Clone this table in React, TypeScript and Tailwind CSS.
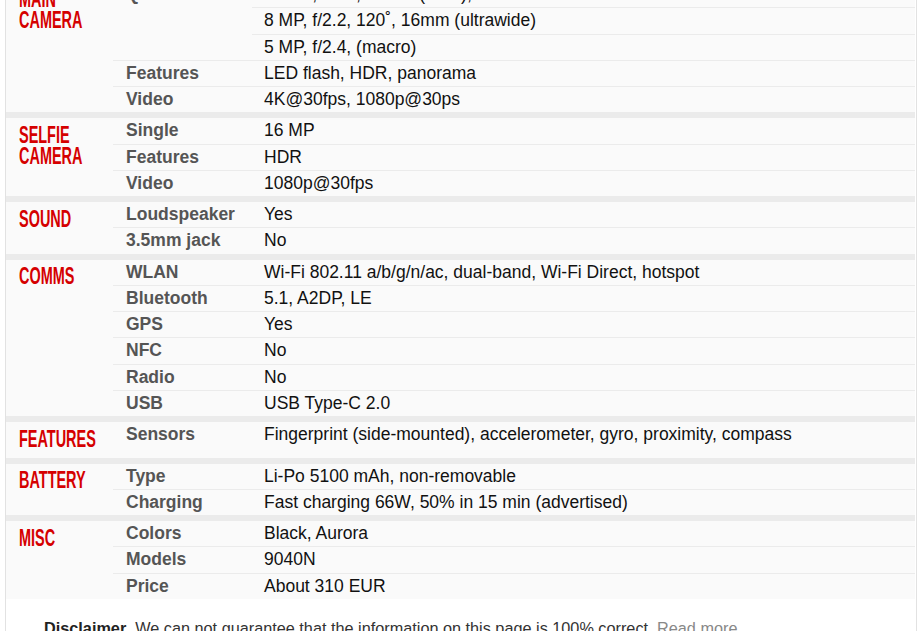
type Row = { label?: string; value: string };
type Section = { title: string[]; rows: Row[] };

const sections: Section[] = [
  {
    title: ["Main", "Camera"],
    rows: [
      { label: "Quad", value: "64 MP, f/1.8, 26mm (wide), PDAF" },
      { value: "8 MP, f/2.2, 120˚, 16mm (ultrawide)" },
      { value: "5 MP, f/2.4, (macro)" },
      { label: "Features", value: "LED flash, HDR, panorama" },
      { label: "Video", value: "4K@30fps, 1080p@30ps" },
    ],
  },
  {
    title: ["Selfie", "Camera"],
    rows: [
      { label: "Single", value: "16 MP" },
      { label: "Features", value: "HDR" },
      { label: "Video", value: "1080p@30fps" },
    ],
  },
  {
    title: ["Sound"],
    rows: [
      { label: "Loudspeaker", value: "Yes" },
      { label: "3.5mm jack", value: "No" },
    ],
  },
  {
    title: ["Comms"],
    rows: [
      { label: "WLAN", value: "Wi-Fi 802.11 a/b/g/n/ac, dual-band, Wi-Fi Direct, hotspot" },
      { label: "Bluetooth", value: "5.1, A2DP, LE" },
      { label: "GPS", value: "Yes" },
      { label: "NFC", value: "No" },
      { label: "Radio", value: "No" },
      { label: "USB", value: "USB Type-C 2.0" },
    ],
  },
  {
    title: ["Features"],
    rows: [
      {
        label: "Sensors",
        value: "Fingerprint (side-mounted), accelerometer, gyro, proximity, compass",
      },
    ],
  },
  {
    title: ["Battery"],
    rows: [
      { label: "Type", value: "Li-Po 5100 mAh, non-removable" },
      { label: "Charging", value: "Fast charging 66W, 50% in 15 min (advertised)" },
    ],
  },
  {
    title: ["Misc"],
    rows: [
      { label: "Colors", value: "Black, Aurora" },
      { label: "Models", value: "9040N" },
      { label: "Price", value: "About 310 EUR" },
    ],
  },
];

function SpecSection({ section }: { section: Section }) {
  const { rows } = section;
  return (
    <div className="flex bg-[#fafafa]">
      <div className="min-h-[35.5px] w-[107px] shrink-0 pb-[9px] pl-[13px] pt-[5.5px] text-[24.5px] font-bold uppercase leading-[21px] text-[#d50000]">
        {section.title.map((line) => (
          <span key={line} className="block origin-left scale-x-[0.59] whitespace-nowrap">
            {line}
          </span>
        ))}
      </div>
      <div className="flex-1">
        {rows.map((row, i) => {
          const last = i === rows.length - 1;
          const continues = !last && !rows[i + 1].label;
          return (
            <div key={i} className="flex text-[17.5px] leading-[25.25px]">
              <div
                className={`w-[139px] shrink-0 pl-[13px] font-bold text-[#555] ${
                  last ? "" : continues ? "border-b border-[#fafafa]" : "border-b border-[#ebebeb]"
                }`}
              >
                {row.label}
              </div>
              <div className={`flex-1 pl-[12px] text-[#111] ${last ? "" : "border-b border-[#ebebeb]"}`}>
                {row.value}
              </div>
            </div>
          );
        })}
      </div>
    </div>
  );
}

export default function App() {
  return (
    <div
      className="h-screen overflow-hidden bg-white"
      style={{ fontFamily: '"Liberation Sans", Arial, sans-serif' }}
    >
      <div className="ml-[5px] w-[912px] border-x border-[#e2e2e2]">
        <div className="-mt-[18px] mr-px">
          {sections.map((s, i) => (
            <div key={i}>
              {i > 0 && <div className="h-[6px] bg-[#ebebeb]" />}
              <SpecSection section={s} />
            </div>
          ))}
        </div>
        <div className="pb-10 pl-[38px] pt-[17px] text-[16.25px] leading-[24px] text-[#333]">
          <b className="text-[#222]">Disclaimer</b>. We can not guarantee that the information on this page is 100%
          correct. <a className="text-[#888]">Read more</a>
        </div>
      </div>
    </div>
  );
}
